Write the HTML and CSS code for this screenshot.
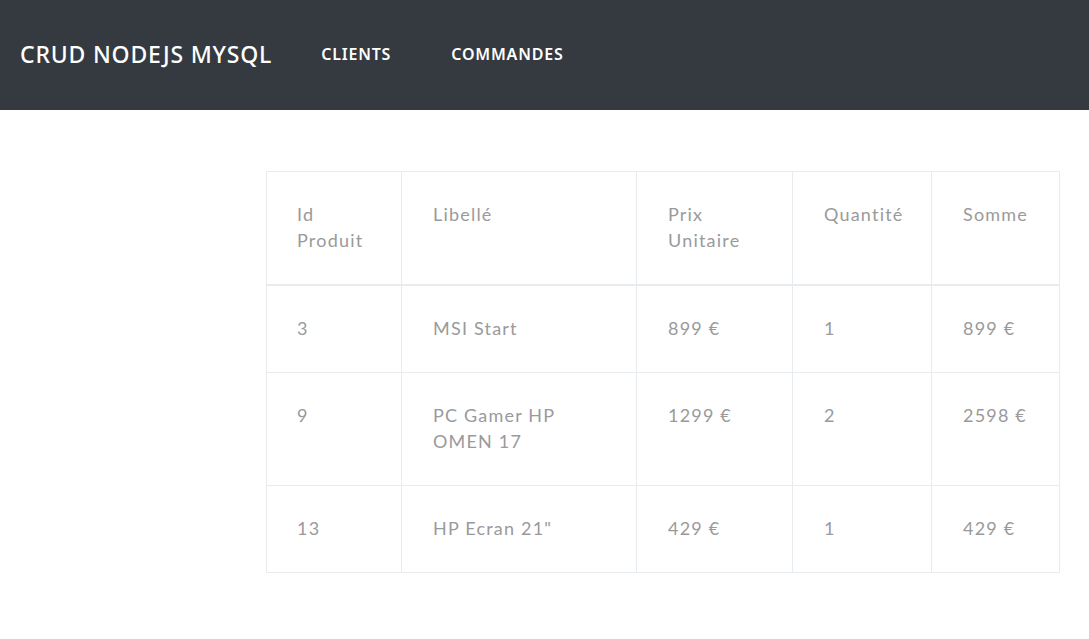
FILE: index.html
```html
<!DOCTYPE html>
<html lang="fr">
<head>
<meta charset="utf-8">
<title>CRUD NODEJS MYSQL</title>
<link rel="stylesheet" href="styles.css">
</head>
<body>
<nav class="navbar">
  <a class="brand" href="#">CRUD NODEJS MYSQL</a>
  <ul class="nav-links">
    <li><a href="#">CLIENTS</a></li>
    <li><a href="#">COMMANDES</a></li>
  </ul>
</nav>
<main class="content">
  <table class="orders">
    <colgroup>
      <col class="c1"><col class="c2"><col class="c3"><col class="c4"><col class="c5">
    </colgroup>
    <thead>
      <tr><th>Id<br>Produit</th><th>Libellé</th><th>Prix<br>Unitaire</th><th>Quantité</th><th>Somme</th></tr>
    </thead>
    <tbody>
      <tr><td>3</td><td>MSI Start</td><td>899 €</td><td>1</td><td>899 €</td></tr>
      <tr><td>9</td><td>PC Gamer HP<br>OMEN 17</td><td>1299 €</td><td>2</td><td>2598 €</td></tr>
      <tr><td>13</td><td>HP Ecran 21"</td><td>429 €</td><td>1</td><td>429 €</td></tr>
    </tbody>
  </table>
</main>
</body>
</html>
```
FILE: styles.css
```css
* { box-sizing: border-box; }
html, body { margin: 0; padding: 0; background: #fff; }
body { font-family: "Noto Sans", sans-serif; }

.navbar {
  height: 110px;
  background: #343a40;
  display: flex;
  align-items: center;
  padding: 0 20px 2px;
}
.brand {
  color: #fff;
  text-decoration: none;
  font-family: "Noto Sans", sans-serif;
  font-size: 23px;
  font-weight: 500;
  letter-spacing: 0.8px;
  margin-right: 49px;
}
.nav-links {
  list-style: none;
  margin: 0;
  padding: 0;
  display: flex;
  gap: 60px;
}
.nav-links a {
  color: #fff;
  text-decoration: none;
  font-size: 16px;
  font-weight: 600;
  letter-spacing: 0.8px;
}

.content {
  padding: 61px 0 0 266px;
}
.orders {
  border-collapse: collapse;
  width: 793px;
  table-layout: fixed;
  font-family: "Lato", sans-serif;
  font-size: 18px;
  line-height: 26px;
  letter-spacing: 1.2px;
  color: #9a9a9a;
}
.c1 { width: 135px; }
.c2 { width: 235px; }
.c3 { width: 156px; }
.c4 { width: 139px; }
.c5 { width: 128px; }
.orders th, .orders td {
  border: 1px solid #e9ecef;
  padding: 29px 16px 31px 31px;
  text-align: left;
  vertical-align: top;
  font-weight: 400;
}
.orders th {
  border-bottom: 2px solid #e9ecef;
}
.orders th:first-child, .orders td:first-child { padding-left: 30px; }
```
